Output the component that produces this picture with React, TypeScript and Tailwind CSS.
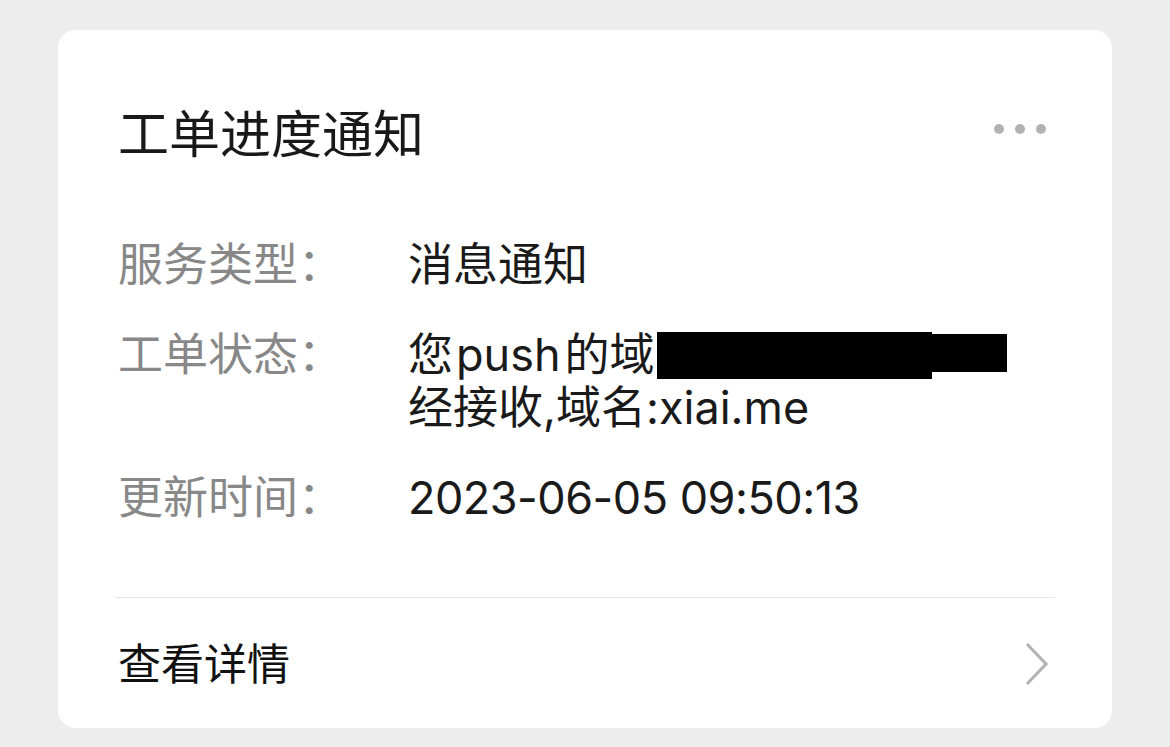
import React from "react";

const font = { fontFamily: "Inter, 'Noto Sans CJK SC', sans-serif" };

function Row({ label, children }: { label: string; children: React.ReactNode }) {
  return (
    <div className="flex">
      <div className="w-[290px] shrink-0 text-[45px] leading-[53px] text-[#888888]">{label}</div>
      <div className="flex-1 text-[45px] leading-[53px] text-[#1a1a1a]">{children}</div>
    </div>
  );
}

export default function App() {
  return (
    <div className="min-h-[747px] w-[1170px] bg-[#ededed] pt-[30px]" style={font}>
      <div className="mx-[58px] h-[698px] rounded-[18px] bg-white">
        <div className="flex items-center justify-between pl-[60px] pr-[66px] pt-[75px]">
          <div className="text-[51px] leading-[60px] text-[#191919]">工单进度通知</div>
          <div className="mb-[12px] flex gap-[11px]">
            <span className="h-[10px] w-[10px] rounded-full bg-[#b2b2b2]" />
            <span className="h-[10px] w-[10px] rounded-full bg-[#b2b2b2]" />
            <span className="h-[10px] w-[10px] rounded-full bg-[#b2b2b2]" />
          </div>
        </div>
        <div className="flex flex-col gap-[37px] pl-[60px] pr-[60px] pt-[73px]">
          <Row label="服务类型：">消息通知</Row>
          <Row label="工单状态：">
            <div className="relative">
              <div>
                您<span className="ml-[3px] mr-[4px]">push</span>的域
              </div>
              <div>经接收,域名:xiai.me</div>
              <div className="absolute left-[249px] top-[4px] h-[47px] w-[275px] bg-black" />
              <div className="absolute left-[499px] top-[6px] h-[38px] w-[100px] bg-black" />
            </div>
          </Row>
          <Row label="更新时间：">
            <span className="tracking-[-0.5px]">2023-06-05 09:50:13</span>
          </Row>
        </div>
        <div className="mx-[57px] mt-[73px] h-px bg-[#e5e5e5]" />
        <div className="flex h-[131px] items-center justify-between pl-[60px] pr-[62px]">
          <div className="text-[43px] leading-[50px] text-[#111111]">查看详情</div>
          <svg width="26" height="44" viewBox="0 0 26 44" fill="none">
            <polyline points="3,2 22,22 3,42" stroke="#b2b2b2" strokeWidth="3" strokeLinejoin="miter" />
          </svg>
        </div>
      </div>
    </div>
  );
}
